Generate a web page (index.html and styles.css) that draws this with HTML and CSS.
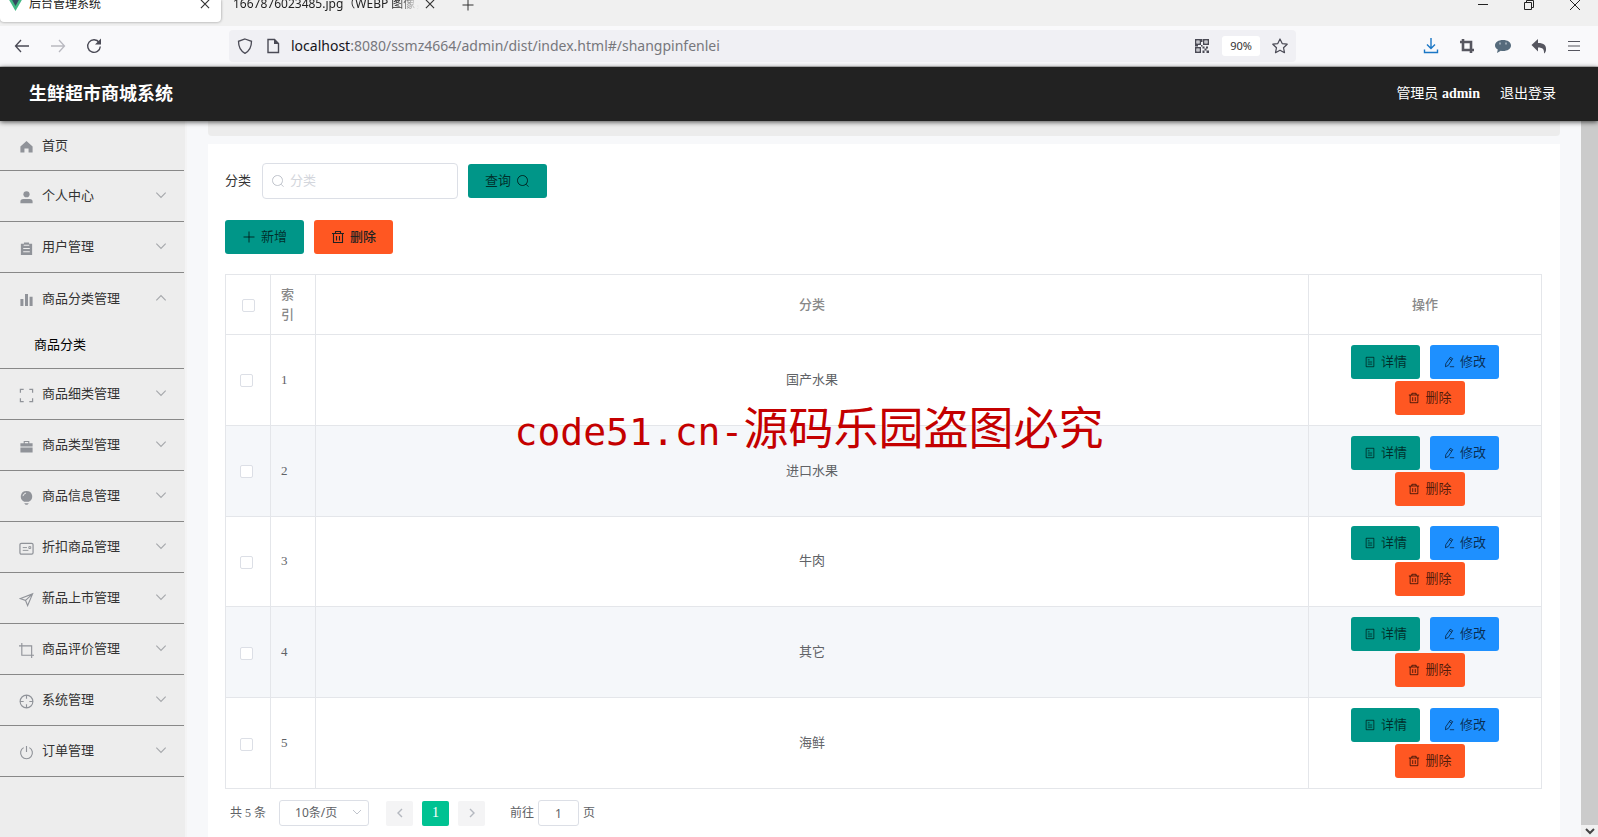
FILE: index.html
```html
<!DOCTYPE html>
<html lang="zh-CN">
<head>
<meta charset="utf-8">
<title>后台管理系统</title>
<link rel="stylesheet" href="styles.css">
</head>
<body>
<svg class="sprite" aria-hidden="true">
  <symbol id="down" viewBox="0 0 12 12"><path d="M2 4l4 4 4-4" fill="none" stroke="currentColor"/></symbol>
  <symbol id="up" viewBox="0 0 12 12"><path d="M2 8l4-4 4 4" fill="none" stroke="currentColor"/></symbol>
  <symbol id="left" viewBox="0 0 12 12"><path d="M8 2L4 6l4 4" fill="none" stroke="currentColor" stroke-width="1.4"/></symbol>
  <symbol id="right" viewBox="0 0 12 12"><path d="M4 2l4 4-4 4" fill="none" stroke="currentColor" stroke-width="1.4"/></symbol>
  <symbol id="close" viewBox="0 0 12 12"><path d="M2.500 2.500l7 7M9.500 2.500l-7 7" fill="none" stroke="currentColor"/></symbol>
  <symbol id="search" viewBox="0 0 14 14"><path d="M6.500 1.500a5 5 0 1 0 .01 0zM10 10.200l2.500 2.500" fill="none" stroke="currentColor"/></symbol>
  <symbol id="plus" viewBox="0 0 14 14"><path d="M7 1.500v11M1.500 7h11" fill="none" stroke="currentColor"/></symbol>
  <symbol id="trash" viewBox="0 0 14 14"><path d="M1 3.500h12M4.500 3.500v-2h5v2M2.500 3.500v9h9v-9M5.500 6v4.500M8.500 6v4.500" fill="none" stroke="currentColor" stroke-width="1.1"/></symbol>
  <symbol id="doc" viewBox="0 0 14 14"><path d="M2.500 1.500h9v11h-9zM4.500 4.500h2M4.500 7h5M4.500 9.500h5" fill="none" stroke="currentColor"/></symbol>
  <symbol id="edit" viewBox="0 0 14 14"><path d="M8.500 1.500l2.800 1.600-5.200 8-3.200 1.400.3-3.400zM7.500 3.200l2.700 1.700M8 12.500h5" fill="none" stroke="currentColor"/></symbol>
  <symbol id="home" viewBox="0 0 16 16"><path d="M8 2.200L1.500 8v6.500h4.300V10h4.400v4.500h4.300V8z" fill="currentColor"/></symbol>
  <symbol id="user" viewBox="0 0 16 16"><circle cx="8" cy="4.500" r="3.300" fill="currentColor"/><path d="M1.500 14v-1.500q0-3 3-3h7q3 0 3 3V14z" fill="currentColor"/></symbol>
  <symbol id="claim" viewBox="0 0 16 16"><path d="M2 3h3.300V1.500h5.400V3H14v12H2z" fill="currentColor"/><path d="M5 4.500h6M4.500 8h7M4.500 11.500h7" stroke="#eee" stroke-width="1.200"/></symbol>
  <symbol id="bars" viewBox="0 0 16 16"><path d="M1.500 7.500h3.200V15H1.500zM6.400 2h3.200v13H6.400zM11.300 5h3.200v10h-3.200z" fill="currentColor"/></symbol>
  <symbol id="full" viewBox="0 0 16 16"><path d="M1.500 5V1.500H5M11 1.500h3.500V5M14.500 11v3.500H11M5 14.500H1.500V11" fill="none" stroke="currentColor" stroke-width="1.300"/></symbol>
  <symbol id="case" viewBox="0 0 16 16"><path d="M1.500 4.500H5V2h6v2.500h3.500V8h-13zM6.200 3.200v1.300h3.600V3.200zM1.500 9h13v5.500h-13z" fill="currentColor" fill-rule="evenodd"/></symbol>
  <symbol id="bulb" viewBox="0 0 16 16"><path d="M8 1a6 6 0 0 1 2.500 11.500h-5A6 6 0 0 1 8 1zM5.500 14h5L9 15.700H7z" fill="currentColor"/><path d="M4.200 6.500Q4.800 3.800 7.500 3.200" fill="none" stroke="#eee"/></symbol>
  <symbol id="card" viewBox="0 0 16 16"><rect x="1" y="2.500" width="14" height="11.500" rx="1.500" fill="none" stroke="currentColor" stroke-width="1.300"/><path d="M4 7h4.500M4 10h6M10.500 6h2v2h-2z" fill="none" stroke="currentColor"/></symbol>
  <symbol id="plane" viewBox="0 0 16 16"><path d="M14.500 2L1.500 7l5.500 2 2.200 5.500zM14.500 2L7 9" fill="none" stroke="currentColor" stroke-width="1.200"/></symbol>
  <symbol id="crop" viewBox="0 0 16 16"><path d="M0 3h13.500v13M3 0v13h13" fill="none" stroke="currentColor" stroke-width="1.200"/></symbol>
  <symbol id="aim" viewBox="0 0 16 16"><circle cx="8" cy="8" r="6.800" fill="none" stroke="currentColor" stroke-width="1.200"/><path d="M8 1v4M8 11v4M1 8h4M11 8h4" stroke="currentColor" stroke-width="1.200"/></symbol>
  <symbol id="power" viewBox="0 0 16 16"><path d="M5 2.800a6.300 6.300 0 1 0 6 0M8 1v6.500" fill="none" stroke="currentColor" stroke-width="1.200"/></symbol>
</svg>

<div class="browser">
  <div class="tabs">
    <div class="tab tab-active">
      <svg class="favicon" viewBox="0 0 16 16"><path d="M0 1h16L8 15z" fill="#41b883"/><path d="M3.200 1h9.600L8 9.500z" fill="#34495e"/></svg>
      <span class="tab-title">后台管理系统</span>
      <button class="plain" aria-label="关闭标签页"><svg class="i14"><use href="#close"/></svg></button>
    </div>
    <div class="tab">
      <span class="tab-title fade">1667876023485.jpg（WEBP 图像，</span>
      <button class="plain" aria-label="关闭标签页"><svg class="i14"><use href="#close"/></svg></button>
    </div>
    <button class="plain new-tab" aria-label="新标签页"><svg class="i14"><use href="#plus"/></svg></button>
    <div class="window-buttons">
      <button class="plain" aria-label="最小化"><svg class="i12" viewBox="0 0 12 12"><path d="M1 5.500h10" stroke="#222"/></svg></button>
      <button class="plain" aria-label="还原"><svg class="i12" viewBox="0 0 12 12"><path d="M1.500 3.500h7v7h-7zM3.500 3.500v-2h7v7h-2" fill="none" stroke="#222"/></svg></button>
      <button class="plain" aria-label="关闭"><svg class="i12" viewBox="0 0 12 12"><path d="M1 1l10 10M11 1L1 11" stroke="#222"/></svg></button>
    </div>
  </div>
  <div class="toolbar">
    <div class="nav">
      <button class="plain" aria-label="后退"><svg class="i16" viewBox="0 0 16 16"><path d="M15 8H1.500M7 2L1.500 8 7 14" fill="none" stroke="#4a4a55" stroke-width="1.300"/></svg></button>
      <button class="plain" aria-label="前进"><svg class="i16" viewBox="0 0 16 16"><path d="M1 8h13.500M9 2l5.500 6L9 14" fill="none" stroke="#b9b9c0" stroke-width="1.300"/></svg></button>
      <button class="plain" aria-label="刷新"><svg class="i16" viewBox="0 0 16 16"><path d="M13.200 4.500A6.300 6.300 0 1 0 14.300 8.500" fill="none" stroke="#4a4a55" stroke-width="1.400"/><path d="M15 .5v6H9z" fill="#4a4a55"/></svg></button>
    </div>
    <div class="address">
      <svg class="i16" viewBox="0 0 16 16"><path d="M8 1l6.500 2.300c0 6-2 9.700-6.500 12-4.500-2.300-6.500-6-6.500-12z" fill="none" stroke="#4a4a55" stroke-width="1.300"/></svg>
      <svg class="i16 page-icon" viewBox="0 0 16 16"><path d="M3 1.500h6.500L13.500 5.500v9H3z" fill="none" stroke="#4a4a55" stroke-width="1.400"/><path d="M9 1l5 5H9z" fill="#4a4a55"/></svg>
      <span class="url"><b>localhost</b>:8080/ssmz4664/admin/dist/index.html#/shangpinfenlei</span>
      <svg class="i16" viewBox="0 0 16 16"><path d="M1.700 1.700h4.600v4.600H1.700zM9.700 1.700h4.600v4.600H9.700zM1.700 9.700h4.600v4.600H1.700z" fill="none" stroke="#4a4a55" stroke-width="1.400"/><path d="M3.500 3.500h1v1h-1zM11.500 3.500h1v1h-1zM3.500 11.500h1v1h-1zM8.500 8.500h2v2h-2zM12 8.500h2v2h-2zM10.500 10.500h2v2h-2zM8.500 12.500h2V15h-2zM12.500 12.500H15V15h-2.500zM7 7h1.500v1.500H7zM7 1h1.500v3H7zM1 7h3v1.500H1z" fill="#4a4a55"/></svg>
      <button class="zoom">90%</button>
      <button class="plain" aria-label="收藏"><svg class="i16" viewBox="0 0 16 16"><path d="M8 1l2.200 4.600 5 .6-3.700 3.500 1 5L8 12.200l-4.500 2.500 1-5L.8 6.200l5-.6z" fill="none" stroke="#4a4a55" stroke-width="1.200" stroke-linejoin="round"/></svg></button>
    </div>
    <div class="extras">
      <button class="plain" aria-label="下载"><svg class="i16" viewBox="0 0 16 16"><path d="M8 0v10M4 6.500l4 4 4-4M1.500 11.500v3h13v-3" fill="none" stroke="#1b77c5" stroke-width="1.400"/></svg></button>
      <button class="plain" aria-label="截图"><svg class="i16" viewBox="0 0 16 16"><path d="M1 4h11v11M4 1v11h11" fill="none" stroke="#56565f" stroke-width="2.600"/></svg></button>
      <button class="plain" aria-label="聊天"><svg class="i16" viewBox="0 0 16 16"><path d="M8 2c4.500 0 8 2.200 8 5.500S12.500 13 8 13c-.8 0-1.500 0-2.200-.2L2 15l.8-3.400C1 10.600 0 9.200 0 7.500 0 4.200 3.500 2 8 2z" fill="#566b7c"/><path d="M5 4.500v2M11 4.500v2" stroke="#dce4ea"/></svg></button>
      <button class="plain" aria-label="撤销"><svg class="i16" viewBox="0 0 16 16"><path d="M7 1v4c6 0 8.500 2.500 8 7-.2 1.800-1 3-2 3.500.3-4-1-6-6-6v4L.5 7z" fill="#56565f"/></svg></button>
      <button class="plain" aria-label="菜单"><svg class="i14" viewBox="0 0 14 14"><path d="M1 2.500h12M1 7h12M1 11.500h12" stroke="#56565f" stroke-width="1.200"/></svg></button>
    </div>
  </div>
</div>

<header class="header">
  <h1>生鲜超市商城系统</h1>
  <span class="admin">管理员 <b>admin</b></span>
  <a href="#logout">退出登录</a>
</header>

<div class="body">
  <nav class="side">
    <a class="item" href="#home"><svg class="i15"><use href="#home"/></svg><span>首页</span></a>
    <a class="item" href="#m1"><svg class="i15"><use href="#user"/></svg><span>个人中心</span><svg class="arrow"><use href="#down"/></svg></a>
    <a class="item" href="#m2"><svg class="i15"><use href="#claim"/></svg><span>用户管理</span><svg class="arrow"><use href="#down"/></svg></a>
    <div class="group">
      <a class="item" href="#m3"><svg class="i15"><use href="#bars"/></svg><span>商品分类管理</span><svg class="arrow"><use href="#up"/></svg></a>
      <a class="sub" href="#/shangpinfenlei">商品分类</a>
    </div>
    <a class="item" href="#m4"><svg class="i15"><use href="#full"/></svg><span>商品细类管理</span><svg class="arrow"><use href="#down"/></svg></a>
    <a class="item" href="#m5"><svg class="i15"><use href="#case"/></svg><span>商品类型管理</span><svg class="arrow"><use href="#down"/></svg></a>
    <a class="item" href="#m6"><svg class="i15"><use href="#bulb"/></svg><span>商品信息管理</span><svg class="arrow"><use href="#down"/></svg></a>
    <a class="item" href="#m7"><svg class="i15"><use href="#card"/></svg><span>折扣商品管理</span><svg class="arrow"><use href="#down"/></svg></a>
    <a class="item" href="#m8"><svg class="i15"><use href="#plane"/></svg><span>新品上市管理</span><svg class="arrow"><use href="#down"/></svg></a>
    <a class="item" href="#m9"><svg class="i15"><use href="#crop"/></svg><span>商品评价管理</span><svg class="arrow"><use href="#down"/></svg></a>
    <a class="item" href="#m10"><svg class="i15"><use href="#aim"/></svg><span>系统管理</span><svg class="arrow"><use href="#down"/></svg></a>
    <a class="item" href="#m11"><svg class="i15"><use href="#power"/></svg><span>订单管理</span><svg class="arrow"><use href="#down"/></svg></a>
  </nav>

  <main class="content">
    <div class="crumbs"></div>
    <section class="card">
      <form class="search">
        <label for="kind">分类</label>
        <span class="field"><svg class="i14"><use href="#search"/></svg><input id="kind" type="text" placeholder="分类"></span>
        <button type="button" class="btn green">查询<svg class="i14"><use href="#search"/></svg></button>
      </form>
      <div class="actions">
        <button class="btn green"><svg class="i14"><use href="#plus"/></svg>新增</button>
        <button class="btn orange strong"><svg class="i14"><use href="#trash"/></svg>删除</button>
      </div>
      <table class="grid">
        <thead>
          <tr><th class="c-check"><input type="checkbox" aria-label="全选"></th><th class="c-index">索引</th><th>分类</th><th class="c-ops">操作</th></tr>
        </thead>
        <tbody>
          <tr><td class="c-check"><input type="checkbox" aria-label="选择 1"></td><td class="c-index">1</td><td>国产水果</td><td class="c-ops"><div class="ops"><button class="btn small green"><svg class="i12"><use href="#doc"/></svg>详情</button><button class="btn small blue"><svg class="i12"><use href="#edit"/></svg>修改</button><button class="btn small orange"><svg class="i12"><use href="#trash"/></svg>删除</button></div></td></tr>
          <tr><td class="c-check"><input type="checkbox" aria-label="选择 2"></td><td class="c-index">2</td><td>进口水果</td><td class="c-ops"><div class="ops"><button class="btn small green"><svg class="i12"><use href="#doc"/></svg>详情</button><button class="btn small blue"><svg class="i12"><use href="#edit"/></svg>修改</button><button class="btn small orange"><svg class="i12"><use href="#trash"/></svg>删除</button></div></td></tr>
          <tr><td class="c-check"><input type="checkbox" aria-label="选择 3"></td><td class="c-index">3</td><td>牛肉</td><td class="c-ops"><div class="ops"><button class="btn small green"><svg class="i12"><use href="#doc"/></svg>详情</button><button class="btn small blue"><svg class="i12"><use href="#edit"/></svg>修改</button><button class="btn small orange"><svg class="i12"><use href="#trash"/></svg>删除</button></div></td></tr>
          <tr><td class="c-check"><input type="checkbox" aria-label="选择 4"></td><td class="c-index">4</td><td>其它</td><td class="c-ops"><div class="ops"><button class="btn small green"><svg class="i12"><use href="#doc"/></svg>详情</button><button class="btn small blue"><svg class="i12"><use href="#edit"/></svg>修改</button><button class="btn small orange"><svg class="i12"><use href="#trash"/></svg>删除</button></div></td></tr>
          <tr><td class="c-check"><input type="checkbox" aria-label="选择 5"></td><td class="c-index">5</td><td>海鲜</td><td class="c-ops"><div class="ops"><button class="btn small green"><svg class="i12"><use href="#doc"/></svg>详情</button><button class="btn small blue"><svg class="i12"><use href="#edit"/></svg>修改</button><button class="btn small orange"><svg class="i12"><use href="#trash"/></svg>删除</button></div></td></tr>
        </tbody>
      </table>
      <div class="pager">
        <span class="total">共 5 条</span>
        <span class="size"><select aria-label="每页条数"><option>10条/页</option></select><svg class="i12"><use href="#down"/></svg></span>
        <div class="pages">
          <button class="page" aria-label="上一页"><svg class="i12"><use href="#left"/></svg></button>
          <button class="page current">1</button>
          <button class="page" aria-label="下一页"><svg class="i12"><use href="#right"/></svg></button>
        </div>
        <label class="jump">前往<input type="text" value="1">页</label>
      </div>
    </section>
  </main>
  <div class="scroll"><div class="thumb"></div><svg class="i12" viewBox="0 0 12 12"><path d="M2 4l4 4 4-4" fill="none" stroke="#444" stroke-width="2"/></svg></div>
</div>
<div class="watermark"><span>code51.cn-</span>源码乐园盗图必究</div>
</body>
</html>
```
FILE: styles.css
```css
* { box-sizing: border-box; }
body {
  margin: 0;
  height: 100vh;
  display: flex;
  flex-direction: column;
  overflow: hidden;
  position: relative;
  font: 13px/20px "Liberation Serif", "Noto Sans CJK SC", serif;
  color: #333;
}
button, input, select { font: inherit; color: inherit; margin: 0; }
button { cursor: pointer; }
a { color: inherit; text-decoration: none; }
svg { display: block; flex: none; }
.sprite { position: absolute; width: 0; height: 0; }
.i12 { width: 12px; height: 12px; }
.i14 { width: 14px; height: 14px; }
.i15 { width: 15px; height: 15px; }
.i16 { width: 16px; height: 16px; }
.plain { border: 0; padding: 0; background: none; display: flex; color: #333; }

/* Browser frame */
.browser { flex: none; font-family: "Noto Sans", "Noto Sans CJK SC", sans-serif; }
.tabs { height: 26px; display: flex; background: #f0f0f0; overflow: hidden; }
.tab { width: 222px; height: 22px; padding: 0 6px 14px 12px; display: flex; align-items: center; gap: 4px; font-size: 12px; color: #222; }
.tab-active { width: 221px; padding-left: 8px; padding-right: 9px; gap: 6px; background: #fff; border-radius: 0 0 4px 4px; box-shadow: 0 0 3px rgba(0, 0, 0, .4); }
.favicon { width: 15px; height: 15px; }
.tab-title { flex: 1; white-space: nowrap; overflow: hidden; }
.fade { mask-image: linear-gradient(90deg, #000 88%, transparent); }
.new-tab { height: 9px; align-items: center; margin-left: 18px; }
.window-buttons { height: 9px; margin-left: auto; padding-right: 17px; display: flex; align-items: center; gap: 34px; }
.toolbar { height: 41px; display: flex; align-items: center; background: #f9f9fb; border-bottom: 1px solid #ccc; }
.nav { width: 222px; padding-left: 14px; display: flex; gap: 20px; }
.address { width: 1067px; height: 32px; margin-left: 7px; padding: 0 8px; display: flex; align-items: center; background: #f0f0f4; border-radius: 4px; }
.page-icon { margin-left: 12px; }
.url { flex: 1; margin-left: 10px; font-size: 14px; color: #77777c; white-space: nowrap; }
.url b { font-weight: 400; color: #15141a; }
.zoom { width: 38px; height: 20px; margin: 0 12px; padding: 0; border: 0; border-radius: 3px; background: #fff; font-size: 11px; line-height: 20px; }
.extras { margin-left: auto; padding-right: 17px; display: flex; align-items: center; gap: 20px; }

/* Application header */
.header {
  flex: none;
  height: 54px;
  padding: 0 42px 0 29px;
  display: flex;
  align-items: center;
  background: #222;
  color: #fff;
  font-size: 14px;
  box-shadow: 0 1px 5px rgba(0, 0, 0, .7);
  z-index: 1;
}
.header h1 { margin: 0 auto 0 0; font-size: 18px; line-height: 24px; }
.header a { margin-left: 20px; }

.body { flex: 1; min-height: 0; display: flex; background: #f7f8fa; }

/* Side menu */
.side { width: 187px; flex: none; padding-right: 3px; background: linear-gradient(#ededed, #ededed) no-repeat 0 0 / 185px 100%, #f4f4f5; }
.item { height: 51px; padding: 0 16px 0 19px; display: flex; align-items: center; gap: 8px; border-bottom: 1px solid #888; }
.item:first-child { height: 50px; }
.group .item:first-child { height: 51px; }
.item svg { color: #909399; margin-top: 2px; }
.item .arrow { width: 14px; height: 14px; margin: 0 0 2px auto; color: #a6a8ac; }
.group { border-bottom: 1px solid #888; }
.group .item { border: 0; }
.sub { display: block; padding: 0 34px; height: 44px; line-height: 42px; color: #000; }

/* Content */
.content { flex: 1; min-width: 0; padding: 0 21px; overflow: hidden; }
.crumbs { height: 15px; background: #ececec; border-radius: 0 0 4px 4px; }
.card { min-height: 100%; margin-top: 8px; padding: 19px 18px 12px 17px; background: #fff; }
.search { display: flex; align-items: center; }
.field { position: relative; width: 196px; margin: 0 10px 0 11px; }
.field svg { position: absolute; left: 9px; top: 11px; color: #c0c4cc; }
.field input { display: block; width: 100%; height: 36px; padding: 0 10px 0 27px; border: 1px solid #dcdfe6; border-radius: 4px; outline: 0; }
.field input::placeholder { color: #d3d6dc; }
.btn { height: 34px; padding: 0 17px; display: flex; align-items: center; gap: 5px; border: 0; border-radius: 3px; color: rgba(0, 0, 0, .7); white-space: nowrap; }
.small { padding: 0 13px; }
.green { background: #009688; }
.orange { background: #ff5722; }
.blue { background: #1e90ff; }
.strong { color: #222; font-weight: 500; }
.actions { display: flex; gap: 10px; margin: 21px 0 20px; }

.grid { width: 100%; height: 515px; table-layout: fixed; border-spacing: 0; border: solid #e4e6ea; border-width: 1px 0 0 1px; color: #606266; }
.grid th, .grid td { padding: 9px 10px; text-align: center; border: solid #e4e6ea; border-width: 0 1px 1px 0; }
.grid th { height: 60px; color: #888; font-weight: 500; }
.grid .c-check { width: 45px; padding: 0; }
.grid .c-index { width: 45px; text-align: left; }
.grid .c-ops { width: 233px; }
.grid tbody tr:nth-child(even) { background: #f5f7fa; }
.grid input { appearance: none; display: block; width: 13px; height: 13px; margin: 2px auto 0 14px; border: 1px solid #dcdfe6; border-radius: 2px; background: #fff; }
.grid th input { margin-left: 16px; }
.ops { display: flex; flex-wrap: wrap; justify-content: center; row-gap: 2px; padding: 0 25px; }
.ops .btn + .btn { margin-left: 10px; }

.pager { display: flex; align-items: center; margin-top: 11px; padding-left: 5px; color: #606266; }
.total { font-size: 12px; }
.size { position: relative; width: 90px; margin-left: 13px; }
.size select { appearance: none; display: block; width: 100%; height: 26px; padding: 0 15px; border: 1px solid #dcdfe6; border-radius: 3px; background: #fff; font-family: "Noto Sans", "Noto Sans CJK SC", sans-serif; font-size: 12px; }
.size svg { position: absolute; right: 6px; top: 6px; color: #c0c4cc; }
.pages { display: flex; gap: 9px; margin: 0 25px 0 17px; }
.page { width: 27px; height: 25px; padding: 0; display: flex; align-items: center; justify-content: center; border: 0; border-radius: 2px; background: #f4f4f5; color: #b4b8bf; }
.current { background: #00c292; color: #fff; font-size: 14px; }
.jump { display: flex; align-items: center; gap: 4px; font-size: 12px; }
.jump input { width: 41px; height: 26px; padding: 0; text-align: center; border: 1px solid #dcdfe6; border-radius: 3px; font-family: "Noto Sans", sans-serif; }

.scroll { width: 17px; flex: none; display: flex; flex-direction: column; align-items: center; background: #f0f0f0; }
.thumb { flex: 1; width: 100%; background: #cbcbcb; }

.watermark {
  position: absolute;
  left: 0;
  right: 0;
  top: 396px;
  padding-left: 20px;
  text-align: center;
  font: 45px/60px "Noto Sans CJK SC", sans-serif;
  color: #c40000;
  pointer-events: none;
  z-index: 2;
}
.watermark span { font-family: "DejaVu Sans Mono", monospace; font-size: 38px; }
```
